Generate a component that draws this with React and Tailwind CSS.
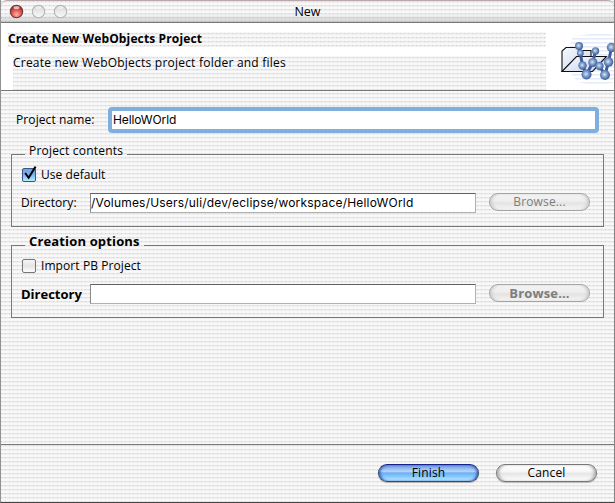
import React from "react";

const STRIPES =
  "bg-[radial-gradient(circle_at_0.5px_1.5px,#d2d2d8_0.6px,transparent_0.7px),linear-gradient(#f7f7f7_0_1px,#e9e9e9_1px_2px,#efefef_2px_3px,#f9f9f9_3px_4px)] bg-[length:4px_4px,4px_4px]";

function Light({ red }) {
  return (
    <svg width="15" height="15" viewBox="0 0 15 15">
      <defs>
        <radialGradient id="redLight" cx="50%" cy="75%" r="75%">
          <stop offset="0" stopColor="#ffb0a0" />
          <stop offset="0.5" stopColor="#e45a52" />
          <stop offset="1" stopColor="#8e1c20" />
        </radialGradient>
        <linearGradient id="greyLight" x1="0" y1="0" x2="0" y2="1">
          <stop offset="0" stopColor="#d2d2d2" />
          <stop offset="0.5" stopColor="#e9e9e9" />
          <stop offset="1" stopColor="#fafafa" />
        </linearGradient>
      </defs>
      <circle cx="7.5" cy="7.5" r="6.2" fill={red ? "url(#redLight)" : "url(#greyLight)"} stroke={red ? "#65393a" : "#b4b4b4"} strokeWidth="1.1" />
      <ellipse cx="7.5" cy="3.6" rx="3" ry="1.5" fill="#fff" opacity={red ? 0.65 : 0.5} />
    </svg>
  );
}

function PillButton({ children, kind }) {
  const look = {
    primary:
      "border-[#39466c] border-t-[#15208a] text-black bg-[linear-gradient(#6f98e0,#b4d6fb_40%,#6cb0f4_50%,#8ccbff_75%,#c0f0ff)] shadow-[inset_2px_0_3px_-1px_#2450b0,inset_-2px_0_3px_-1px_#2450b0,0_1px_1px_#b0b0b0]",
    normal:
      "border-[#777] text-black bg-[linear-gradient(#fff,#f5f5f5_45%,#e4e4e4_50%,#fff)] shadow-[inset_3px_0_3px_-1px_#b0b0b0,inset_-3px_0_3px_-1px_#b0b0b0,0_1px_1px_#b8b8b8]",
    disabled:
      "border-[#a5a5a5] text-[#7d7d7d] bg-[linear-gradient(#f3f3f3,#eeeeee_45%,#e3e3e3_55%,#f5f5f5)] shadow-[inset_3px_0_3px_-1px_#cfcfcf,inset_-3px_0_3px_-1px_#cfcfcf]",
  }[kind];
  return (
    <button className={"flex h-[18px] w-[101px] shrink-0 items-center justify-center rounded-full border leading-none tracking-[0.15px] " + look}>
      {children}
    </button>
  );
}

function Checkbox({ checked }) {
  return (
    <svg width="17" height="18" viewBox="0 0 17 18" className="shrink-0">
      <defs>
        <linearGradient id="boxBlue" x1="0" y1="0" x2="0" y2="1">
          <stop offset="0" stopColor="#6f9fdc" />
          <stop offset="0.5" stopColor="#79b5f0" />
          <stop offset="1" stopColor="#b9f3ff" />
        </linearGradient>
        <linearGradient id="boxGrey" x1="0" y1="0" x2="0" y2="1">
          <stop offset="0" stopColor="#f8f8f8" />
          <stop offset="0.5" stopColor="#e4e4e4" />
          <stop offset="1" stopColor="#ffffff" />
        </linearGradient>
      </defs>
      <rect x="0.5" y="3.5" width="13" height="13" rx="1.5" fill={checked ? "url(#boxBlue)" : "url(#boxGrey)"} stroke={checked ? "#3e5488" : "#777"} />
      {checked && <path d="M3.2 8 L6.6 12.8 L13.6 1.6" fill="none" stroke="#000" strokeWidth="2" />}
    </svg>
  );
}

function Field({ children }) {
  return (
    <div className="flex h-5 w-[386px] shrink-0 items-center border border-[#b0b0b0] border-t-[#606060] border-l-[#8c8c8c] bg-white pb-px font-[Inter,sans-serif] text-[12px] tracking-[0.2px] whitespace-pre">
      {children}
    </div>
  );
}

const BEADS = [
  [33.5, 24, 4], [34.8, 31, 3.4], [37, 43.5, 4.2], [41, 52.5, 5], [47.3, 40.5, 4.6], [50, 29, 3.7],
  [54, 44, 4.2], [59.5, 53, 5], [63, 40, 4.8], [66, 25.5, 4.7],
];

function WebObjectsIcon() {
  return (
    <svg width="68" height="67" viewBox="0.5 1 68 67" className="shrink-0">
      <defs>
        <radialGradient id="bead" cx="45%" cy="45%" r="60%">
          <stop offset="0" stopColor="#d8e6f5" />
          <stop offset="0.4" stopColor="#86a5ce" />
          <stop offset="1" stopColor="#2d4f91" />
        </radialGradient>
        <linearGradient id="folder" x1="0" y1="0" x2="1" y2="1">
          <stop offset="0" stopColor="#f7f9ff" />
          <stop offset="1" stopColor="#c7d3ec" />
        </linearGradient>
        <pattern id="haze" width="4" height="4" patternUnits="userSpaceOnUse">
          <rect width="4" height="1.6" fill="#e6ebf8" />
        </pattern>
      </defs>
      <path d="M27 15 Q50 9 69 13 V60 Q53 66 33 60 Q17 48 27 15" fill="url(#haze)" />
      <path d="M16.5 49.5 V29 L20.5 25.5 H32 L34 28.5 H45.5 V34" fill="url(#folder)" stroke="#111" strokeWidth="1.1" />
      <path d="M16.5 49.5 L31 34.5 H61 L47 49.5 Z" fill="url(#folder)" stroke="#111" strokeWidth="1.1" />
      <path d="M33.5 24 L34.8 31 L37 43.5 L41 52.5 L47.3 40.5 L50 29 M47.3 40.5 L54 44 L59.5 53 L63 40 L66 25.5" fill="none" stroke="#3d5c99" strokeWidth="3" />
      {BEADS.map(([x, y, r]) => (
        <circle key={x} cx={x} cy={y} r={r} fill="url(#bead)" />
      ))}
    </svg>
  );
}

export default function App() {
  return (
    <div className={"flex h-[503px] w-[615px] flex-col overflow-hidden border-r border-b border-l border-r-[#858585] border-b-[#444] border-l-[#929292] font-['Open_Sans',sans-serif] text-[12px] leading-[16px] text-black " + STRIPES}>
      <div className="grid h-[23px] shrink-0 grid-cols-[1fr_auto_1fr] items-center rounded-t-[6px] border-t border-b border-t-[#b8a6a8] border-b-[#777] bg-linear-to-b from-transparent from-60% to-black/15">
        <div className="flex gap-[7px] pl-2">
          <Light red />
          <Light />
          <Light />
        </div>
        <span className="text-[12.5px]">New</span>
      </div>
      <div className="flex h-[68px] shrink-0 justify-between border-b border-[#777] bg-white">
        <div className="flex w-[545px] flex-col pl-[7px] pt-[9px]">
          <div className={"h-[15px] font-bold leading-[13px] tracking-[0.13px] whitespace-nowrap " + STRIPES}>
            <span>Create New WebObjects Project</span>
          </div>
          <div className={"mt-[9px] ml-[5px] h-[34px] leading-[14px] tracking-[0.22px] whitespace-nowrap " + STRIPES}>
            <span>Create new WebObjects project folder and files</span>
          </div>
        </div>
        <WebObjectsIcon />
      </div>
      <div className="flex h-[354px] shrink-0 flex-col border-b border-[#777] pt-[16px] pl-[10px]">
        <div className="flex h-[26px] items-center pl-[5px]">
          <span className="w-[92px] tracking-[0.1px]"><span>Project name:</span></span>
          <div className="flex h-[26px] w-[491px] items-center rounded-[4px] border-4 border-[#7fb0dd] bg-white pl-px font-[Inter,sans-serif] text-[12px] tracking-[-0.1px]">
            <span>HelloWOrld</span>
          </div>
        </div>
        <fieldset className="mt-[12px] flex h-[82px] w-[593px] flex-col border border-[#777] pl-[10px]">
          <legend className="ml-[3px] h-[18px] pr-[4px] pl-1 leading-[12px] tracking-[0.2px]"><span>Project contents</span></legend>
          <div className="mt-[2px] flex h-[18px] items-center gap-[2px]">
            <Checkbox checked />
            <span className="pt-[2px] tracking-[0.05px]"><span>Use default</span></span>
          </div>
          <div className="mt-[10px] flex h-5">
            <span className="-ml-px w-[69px] shrink-0 leading-[20px] tracking-[0.1px]"><span>Directory:</span></span>
            <Field><span>/Volumes/Users/uli/dev/eclipse/workspace/HelloWOrld</span></Field>
            <div className="pl-[13px]"><PillButton kind="disabled"><span>Browse...</span></PillButton></div>
          </div>
        </fieldset>
        <fieldset className="mt-[9px] flex h-[82px] w-[593px] flex-col border border-[#777] pl-[10px]">
          <legend className="ml-[3px] h-[18px] pr-[4px] pl-1 text-[13px] leading-[11px] font-bold tracking-[0.15px]"><span>Creation options</span></legend>
          <div className="mt-[2px] flex h-[18px] items-center gap-[2px]">
            <Checkbox />
            <span className="pt-[2px] tracking-[0.08px]"><span>Import PB Project</span></span>
          </div>
          <div className="mt-[10px] flex h-5">
            <span className="-ml-px w-[69px] shrink-0 text-[13px] leading-[21px] font-bold"><span>Directory</span></span>
            <Field />
            <div className="pl-[13px] text-[13px] font-bold"><PillButton kind="disabled"><span>Browse...</span></PillButton></div>
          </div>
        </fieldset>
      </div>
      <div className="flex justify-end gap-[17px] pt-[19px] pr-[17px]">
        <PillButton kind="primary"><span>Finish</span></PillButton>
        <PillButton kind="normal"><span>Cancel</span></PillButton>
      </div>
    </div>
  );
}
